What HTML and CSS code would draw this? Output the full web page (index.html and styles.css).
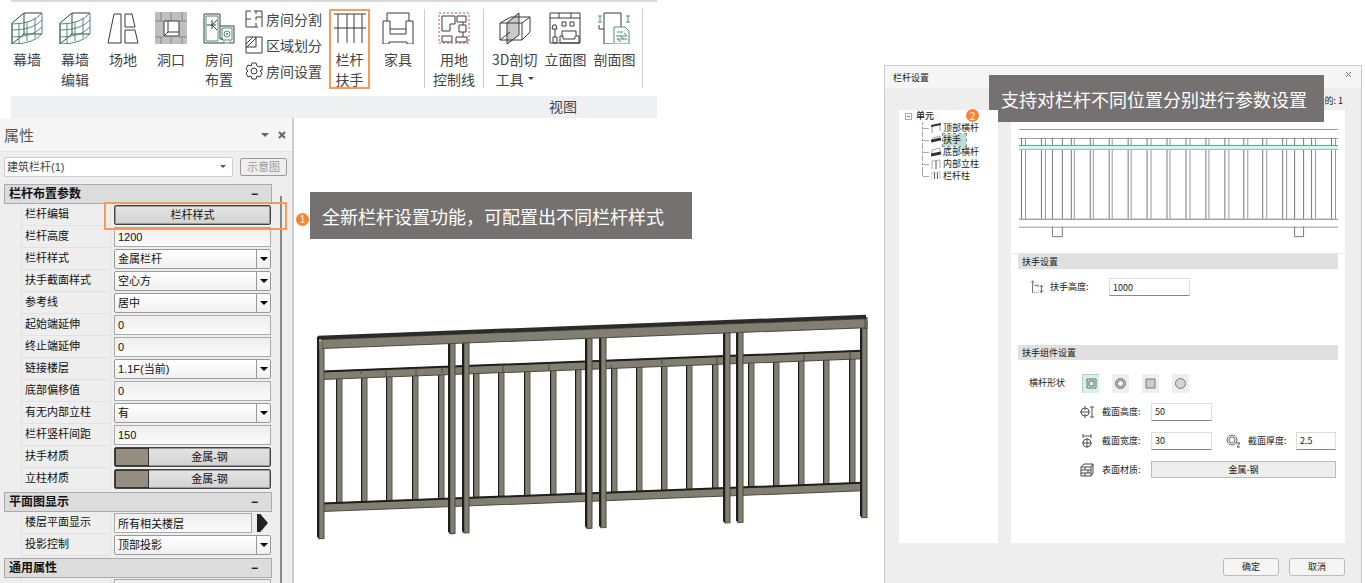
FILE: index.html
```html
<!DOCTYPE html>
<html lang="zh-CN">
<head>
    <meta charset="UTF-8">
    <meta name="viewport" content="width=device-width, initial-scale=1.0">
    <title>栏杆设置</title>
    <link rel="stylesheet" href="styles.css">
</head>
<body>
    <div class="page">
        <div class="workspace">
            <!-- Ribbon -->
            <div class="ribbon">
                <div class="tools">
                    <div class="tool-group wide">
                        <button class="tool">
                            <svg class="icon" viewBox="0 0 32 32"><path class="k" d="M1 32V11L13 1H31M13 1V22H31M1 32L13 22"/><path class="g" d="M1 12Q22 12 31 1V22Q22 32 1 32ZM1 18Q22 18 31 8M1 25Q22 25 31 15M8 12V31M16 10V29M24 6V26"/></svg>
                            <span>幕墙</span>
                        </button>
                        <button class="tool">
                            <svg class="icon" viewBox="0 0 32 32"><path class="k" d="M1 32V11L13 1H31M13 1V22H31M1 32L13 22"/><path class="g" d="M1 12Q22 12 31 1V22Q22 32 1 32ZM1 18Q22 18 31 8M1 25Q22 25 31 15M8 12V31M16 10V29M24 6V26"/></svg>
                            <span>幕墙<br>编辑</span>
                        </button>
                        <button class="tool">
                            <svg class="icon" viewBox="0 0 32 32"><path class="k" d="M7 2H14V31H1ZM18 2H25L28 15H18ZM18 18H28L31 31H18Z"/></svg>
                            <span>场地</span>
                        </button>
                        <button class="tool">
                            <svg class="icon" viewBox="0 0 32 32"><path fill="#bfbfbf" d="M0 0H32V32H0Z"/><path stroke="#858585" d="M0 9H8M24 9H32M0 25H8M24 25H32M6 0V9M16 0V9M27 0V9M6 25V32M16 25V32M27 25V32"/><path class="k" fill="#fff" d="M9 9H24V24H9Z"/><path class="k" d="M13 9V20H24M9 24L13 20"/></svg>
                            <span>洞口</span>
                        </button>
                        <button class="tool">
                            <svg class="icon" viewBox="0 0 32 32"><path class="g" d="M3 4H15V29H3ZM19 16H29V28H19ZM21 29V31H27V29"/><path class="k" d="M21 31H1V2H17V14H31V31H27M17 14V27H20M4 13H13M9 8V17M14 8L9 13L14 18"/><circle class="g" cx="24" cy="22" r="3"/><circle cx="24" cy="22" r="1" fill="#4f8c78"/></svg>
                            <span>房间<br>布置</span>
                        </button>
                    </div>
                    <div class="tool-list">
                        <button class="tool-small">
                            <svg class="icon-small" viewBox="0 0 18 18"><path class="k" d="M6 1H1V17H13M9 1H17V17M1 9H6M11 17V13M11 10V7H17M11 1V4"/></svg>
                            <span>房间分割</span>
                        </button>
                        <button class="tool-small">
                            <svg class="icon-small" viewBox="0 0 18 18"><path class="k" d="M1 1H17V17H1ZM1 11H11V1M1 8L8 1M2 11L11 2"/></svg>
                            <span>区域划分</span>
                        </button>
                        <button class="tool-small">
                            <svg class="icon-small" viewBox="0 0 18 18"><path class="k" d="M7 1H11L12 4L14 5L17 4V8L15 9L17 11L15 15L12 14L11 17H7L6 14L3 15L1 11L3 9L1 7L3 3L6 4Z"/><circle class="k" cx="9" cy="9" r="3"/></svg>
                            <span>房间设置</span>
                        </button>
                    </div>
                    <button class="tool marked">
                        <svg class="icon" viewBox="0 0 32 32"><path class="k" d="M0 2H32M0 16H32M4 2V31M13 2V31M20 2V31M28 2V31"/></svg>
                        <span>栏杆<br>扶手</span>
                    </button>
                    <div class="tool-group furniture">
                        <button class="tool">
                            <svg class="icon" viewBox="0 0 32 32"><path class="k" d="M5 9V1H27V9H31V32H25V30H7V32H1V9H8V22H24V9H27M8 17H24"/></svg>
                            <span>家具</span>
                        </button>
                    </div>
                    <div class="tool-group divided">
                        <button class="tool">
                            <svg class="icon" viewBox="0 0 32 32"><path stroke="#d0454c" stroke-dasharray="2 2" d="M1 1H31V31H1Z"/><path class="k" d="M4 4H17V12H12V19H4ZM19 4H28V10H19ZM21 13H28V20H21ZM18 25H29V30H18ZM4 24H14V30H4ZM25 10V13M25 20V25"/></svg>
                            <span>用地<br>控制线</span>
                        </button>
                    </div>
                    <div class="tool-group divided views">
                        <button class="tool">
                            <svg class="icon" viewBox="0 0 32 32"><path fill="#c9c9c9" d="M8 10L20 0V23L8 33Z"/><path class="k" d="M1 11L12 5H31V20L23 28H1ZM1 11H23V28M23 11L31 5M8 11L20 1V23L8 32ZM1 28L11 20"/></svg>
                            <span>3D剖切<br>工具<i class="caret"></i></span>
                        </button>
                        <button class="tool">
                            <svg class="icon" viewBox="0 0 32 32"><path class="k" d="M1 1H31V31H1ZM1 6H31M10 1V6M22 1V6M13 10H17V14H13ZM21 10H25V14H21ZM3 17L4 13H7L8 17ZM6 17V25M4 25H8V31H4ZM13 24V19H27V24H30V31H11V24H14V27H26V24"/></svg>
                            <span>立面图</span>
                        </button>
                        <button class="tool">
                            <svg class="icon" viewBox="0 0 32 32"><path class="k" d="M15 32H6V1H23V15M1 13V17H6"/><path class="g" d="M0 4H4M2 4V10M0 10H4M28 4H32M30 4V10M28 10H32"/><path class="g" fill="#fff" d="M16 15H27L31 19V32H16Z"/><path class="g" d="M19 20H25M18 24H29L26 21M29 27H19L23 30M22 24L26 27"/></svg>
                            <span>剖面图</span>
                        </button>
                    </div>
                </div>
                <div class="ribbon-title">视图</div>
            </div>

            <div class="model-area">
                <!-- Properties panel -->
                <div class="panel">
                    <div class="panel-head">
                        <h2>属性</h2>
                        <button class="head-btn" aria-label="菜单"><i class="arrow"></i></button>
                        <button class="head-btn" aria-label="关闭"><svg viewBox="0 0 8 8"><path stroke="#666" stroke-width="2" d="M1 1L7 7M7 1L1 7"/></svg></button>
                    </div>
                    <div class="type-row">
                        <div class="pick type-pick">
                            <select aria-label="类型"><option>建筑栏杆(1)</option></select>
                        </div>
                        <button class="sketch-btn">示意图</button>
                    </div>
                    <div class="params">
                        <div class="groups">
                            <h3>栏杆布置参数<span>−</span></h3>
                            <div class="row row-marked"><label for="edit">栏杆编辑</label><button class="style-btn" id="edit">栏杆样式</button></div>
                            <div class="row"><label for="height">栏杆高度</label><input type="text" id="height" value="1200"></div>
                            <div class="row"><label for="style">栏杆样式</label><div class="pick"><select id="style"><option>金属栏杆</option></select></div></div>
                            <div class="row"><label for="section">扶手截面样式</label><div class="pick"><select id="section"><option>空心方</option></select></div></div>
                            <div class="row"><label for="refline">参考线</label><div class="pick"><select id="refline"><option>居中</option></select></div></div>
                            <div class="row"><label for="start">起始端延伸</label><input type="text" id="start" value="0"></div>
                            <div class="row"><label for="end">终止端延伸</label><input type="text" id="end" value="0"></div>
                            <div class="row"><label for="floor">链接楼层</label><div class="pick"><select id="floor"><option>1.1F(当前)</option></select></div></div>
                            <div class="row"><label for="offset">底部偏移值</label><input type="text" id="offset" value="0"></div>
                            <div class="row"><label for="inner">有无内部立柱</label><div class="pick"><select id="inner"><option>有</option></select></div></div>
                            <div class="row"><label for="spacing">栏杆竖杆间距</label><input type="text" id="spacing" value="150"></div>
                            <div class="row"><label for="mat1">扶手材质</label><button class="mat-btn" id="mat1"><i></i><span>金属-钢</span></button></div>
                            <div class="row"><label for="mat2">立柱材质</label><button class="mat-btn" id="mat2"><i></i><span>金属-钢</span></button></div>
                            <h3>平面图显示<span>−</span></h3>
                            <div class="row"><label for="plan">楼层平面显示</label><input type="text" id="plan" value="所有相关楼层"><button class="play" aria-label="展开"></button></div>
                            <div class="row"><label for="proj">投影控制</label><div class="pick"><select id="proj"><option>顶部投影</option></select></div></div>
                            <h3>通用属性<span>−</span></h3>
                            <div class="row"><label for="common"></label><input type="text" id="common"></div>
                        </div>
                        <div class="scrollbar"></div>
                    </div>
                </div>

                <!-- 3D view -->
                <div class="viewport">
                    <div class="note">
                        <span class="badge">1</span>
                        <p class="callout">全新栏杆设置功能，可配置出不同栏杆样式</p>
                    </div>
                    <svg class="railing" viewBox="0 0 560 245">
                        <defs>
                            <g id="post"><path fill="#827e72" stroke="#4a483f" d="M2 0H7V196H2Z"/><path fill="#1e1f1b" d="M0 -1H2V196L0 194Z"/></g>
                            <g id="bar"><path fill="#827e72" stroke="#5a584e" d="M1 0H6V130H1Z"/><path fill="#1e1f1b" d="M0 0H1V130H0Z"/></g>
                        </defs>
                        <g transform="skewY(-2.2)">
                            <use href="#bar" x="26" y="76"/><use href="#bar" x="51" y="76"/><use href="#bar" x="76" y="76"/><use href="#bar" x="102" y="76"/><use href="#bar" x="128" y="76"/>
                            <use href="#bar" x="163" y="76"/><use href="#bar" x="188" y="76"/><use href="#bar" x="214" y="76"/><use href="#bar" x="240" y="76"/><use href="#bar" x="265" y="76"/>
                            <use href="#bar" x="301" y="76"/><use href="#bar" x="326" y="76"/><use href="#bar" x="351" y="76"/><use href="#bar" x="376" y="76"/><use href="#bar" x="402" y="76"/>
                            <use href="#bar" x="438" y="76"/><use href="#bar" x="463" y="76"/><use href="#bar" x="488" y="76"/><use href="#bar" x="513" y="76"/><use href="#bar" x="539" y="76"/>
                            <path fill="#827e72" stroke="#4a483f" d="M12 72H552V80H12ZM12 204H552V212H12Z"/>
                            <path fill="#1e1f1b" d="M12 71H552V73H12ZM12 203H552V205H12Z"/>
                            <path stroke="#4a483f" d="M51 72V76M76 72V80M106 72V80M132 72V78M193 72V80M239 72V80M301 77V80M352 73V78M407 72V80M494 72V80M540 72V80"/>
                            <use href="#post" x="7" y="43"/><use href="#post" x="138" y="43"/><use href="#post" x="152" y="43"/><use href="#post" x="275" y="43"/>
                            <use href="#post" x="289" y="43"/><use href="#post" x="413" y="43"/><use href="#post" x="426" y="43"/><use href="#post" x="550" y="43"/>
                            <path fill="#827e72" stroke="#4a483f" d="M12 40H555V49H12ZM555 39H557V50H555Z"/>
                            <path fill="#2b2c27" d="M8 36H556V40H8Z"/>
                            <path fill="#1e1f1b" d="M7 37H9V50H7Z"/>
                            <path fill="#827e72" d="M9 41H12V50H9Z"/>
                        </g>
                    </svg>
                </div>
            </div>
        </div>

        <!-- Railing settings dialog -->
        <div class="dialog">
            <div class="dialog-head">
                <h2>栏杆设置</h2>
                <button class="close" aria-label="关闭"><svg viewBox="0 0 8 8"><path stroke="#777" d="M2 2L7 7M7 2L2 7"/></svg></button>
            </div>
            <p class="callout dialog-callout">支持对栏杆不同位置分别进行参数设置</p>
            <div class="count">的: 1</div>
            <div class="panes">
                <div class="tree">
                    <span class="badge tree-badge">2</span>
                    <div class="tree-root"><i></i>单元</div>
                    <ul>
                        <li><svg viewBox="0 0 10 10"><path stroke="#999" d="M1 10V3M9 8V1"/><path stroke="#333" stroke-width="2" d="M0 3L10 1"/></svg><span>顶部横杆</span></li>
                        <li><svg viewBox="0 0 10 10"><path stroke="#333" stroke-width="3" d="M0 6L10 4"/><path stroke="#aaa" d="M1 3L10 1"/></svg><span class="selected">扶手</span></li>
                        <li><svg viewBox="0 0 10 10"><path stroke="#aaa" d="M1 9V3L9 1V8"/><path stroke="#333" stroke-width="3" d="M0 8L10 6"/></svg><span>底部横杆</span></li>
                        <li><svg viewBox="0 0 10 10"><path stroke="#aaa" d="M1 10V2L9 1V9"/><path stroke="#555" d="M5 2V10"/></svg><span>内部立柱</span></li>
                        <li><svg viewBox="0 0 10 10"><path stroke="#bbb" d="M0 9V2L9 1V8"/><path stroke="#555" d="M3.500 2V8M6.500 2V8"/></svg><span>栏杆柱</span></li>
                    </ul>
                </div>
                <div class="detail">
                    <div class="preview">
                        <svg viewBox="0 0 320 114">
                            <path stroke="#999" d="M0 4.500H320M0 13.500H320M0 102.500H320"/>
                            <path stroke="#777" d="M0 94.500H320M33.500 13V94M43.500 13V94M276.500 13V94M285.500 13V94"/>
                            <path stroke="#777" d="M33.500 102V112H43.500V102M276.500 102V112H285.500V102"/>
                            <path stroke="#777" d="M2.500 13V94M22.500 13V94M52.500 13V94M71.500 13V94M90.500 13V94M109.500 13V94M128.500 13V94M148.500 13V94M167.500 13V94M187.500 13V94M206.500 13V94M225.500 13V94M244.500 13V94M264.500 13V94M293.500 13V94M313.500 13V94"/>
                            <path stroke="#999" d="M6.500 13V94M26.500 13V94M55.500 13V94M74.500 13V94M93.500 13V94M112.500 13V94M132.500 13V94M151.500 13V94M171.500 13V94M190.500 13V94M210.500 13V94M229.500 13V94M248.500 13V94M268.500 13V94M297.500 13V94M317.500 13V94"/>
                            <path fill="#d9f3ec" d="M0 20H320V25H0Z"/>
                            <path stroke="#56a08d" d="M0 20.500H320"/><path stroke="#8fc4b6" d="M0 24.500H320"/>
                        </svg>
                    </div>
                    <h3>扶手设置</h3>
                    <div class="fields rail-fields">
                        <svg class="mini" viewBox="0 0 14 16"><circle cx="2" cy="2" r="1" stroke="#555"/><path stroke="#555" d="M2 3V15M4 6H9M12 6V15M10 8L12 6L14 8M10 12L12 14L14 12"/><path stroke="#555" stroke-dasharray="1 1" d="M4 14H10M8 7V9"/></svg>
                        <label for="rail-height">扶手高度:</label>
                        <input type="text" id="rail-height" value="1000">
                    </div>
                    <h3>扶手组件设置</h3>
                    <div class="shapes">
                        <span>横杆形状</span>
                        <button class="shape on" aria-label="空心方"><svg viewBox="0 0 11 11"><path stroke="#666" d="M1 1H10V10H1ZM3 3H8V8H3Z"/></svg></button>
                        <button class="shape" aria-label="空心圆"><svg viewBox="0 0 11 11"><circle stroke="#777" fill="#bbb" cx="5.500" cy="5.500" r="5"/><circle stroke="#777" fill="#fff" cx="5.500" cy="5.500" r="3"/></svg></button>
                        <button class="shape" aria-label="实心方"><svg viewBox="0 0 11 11"><path stroke="#777" fill="#ccc" d="M1 1H10V10H1Z"/></svg></button>
                        <button class="shape" aria-label="实心圆"><svg viewBox="0 0 11 11"><circle stroke="#777" fill="#d4d4d4" cx="5.500" cy="5.500" r="5"/></svg></button>
                    </div>
                    <div class="fields">
                        <svg class="mini" viewBox="0 0 14 14"><circle cx="5" cy="7" r="4" stroke="#555"/><path stroke="#555" d="M0 7H10M5 1V5M5 9V13M10 2H14M12 2V12M10 12H14"/></svg>
                        <label for="sec-height">截面高度:</label>
                        <input type="text" id="sec-height" value="50">
                    </div>
                    <div class="fields">
                        <svg class="mini" viewBox="0 0 14 14"><circle cx="7" cy="9" r="4" stroke="#555"/><path stroke="#555" d="M7 4V14M2 9H12M3 2H11M3 0V4M11 0V4"/></svg>
                        <label for="sec-width">截面宽度:</label>
                        <input type="text" id="sec-width" value="30">
                        <svg class="mini second" viewBox="0 0 14 14"><circle cx="6" cy="6" r="5" stroke="#666"/><circle cx="6" cy="6" r="3" stroke="#666"/><path stroke="#555" d="M10 9H14L11 13H14"/></svg>
                        <label for="sec-thick">截面厚度:</label>
                        <input type="text" id="sec-thick" class="short" value="2.5">
                    </div>
                    <div class="fields">
                        <svg class="mini" viewBox="0 0 14 14"><path stroke="#444" d="M1 4L4 1H13V10L11 13H1ZM1 4H11V13M11 4L13 1M1 7H11M1 10H11M5 4V7M8 7V10M5 10V13"/></svg>
                        <label for="surface">表面材质:</label>
                        <button class="surface" id="surface">金属-钢</button>
                    </div>
                </div>
            </div>
            <div class="dialog-foot">
                <button>确定</button>
                <button>取消</button>
            </div>
        </div>
    </div>
</body>
</html>
```
FILE: styles.css
```css
*, *::before, *::after {
    box-sizing: border-box;
}
body {
    margin: 0;
    background: #fff;
    color: #222;
    font-family: "Liberation Sans", "Noto Sans CJK SC", sans-serif;
}
h2, h3, p, ul {
    margin: 0;
    padding: 0;
    font-weight: normal;
}
button, input, select {
    margin: 0;
    padding: 0;
    border: none;
    border-radius: 0;
    background: none;
    color: inherit;
    font: inherit;
    appearance: none;
}
svg {
    display: block;
    flex-shrink: 0;
    fill: none;
}
.page {
    display: flex;
    height: 100vh;
    overflow: hidden;
}
.workspace {
    flex: 1;
    min-width: 0;
    display: flex;
    flex-direction: column;
}

/* Ribbon */
.ribbon {
    width: 646px;
    margin-left: 11px;
    border-top: 2px solid #d9d9d9;
    color: #444;
    font: 14px/20px "Noto Sans CJK SC", sans-serif;
}
.tools {
    display: flex;
    height: 94px;
    padding-top: 7px;
}
.tool-group {
    display: flex;
    height: 79px;
}
.wide {
    gap: 16px;
}
.tool {
    display: flex;
    flex-direction: column;
    align-items: center;
    min-width: 32px;
    height: 80px;
    padding-top: 3px;
    white-space: nowrap;
}
.tool span {
    margin-top: 5px;
}
.icon {
    width: 32px;
    height: 32px;
}
.k {
    stroke: #3a3a3a;
}
.g {
    stroke: #4f8c78;
}
.tool-list {
    display: flex;
    flex-direction: column;
    gap: 6px;
    margin: 0 7px 0 10px;
}
.tool-small {
    display: flex;
    align-items: center;
    gap: 3px;
    height: 20px;
}
.icon-small {
    width: 18px;
    height: 18px;
}
.marked {
    width: 41px;
    padding-top: 1px;
    border: 2px solid #f79b57;
}
.furniture {
    padding: 0 10px 0 12px;
}
.divided {
    padding: 0 8px;
    border-left: 1px solid #ccc;
}
.views {
    gap: 7px;
    padding-right: 7px;
    border-right: 1px solid #ccc;
}
.caret {
    display: inline-block;
    margin: 0 0 5px 4px;
    border: 3px solid transparent;
    border-top-color: #444;
    border-bottom: none;
}
.ribbon-title {
    height: 22px;
    padding-left: 458px;
    background: #edf1f2;
    text-align: center;
}

/* Properties panel */
.model-area {
    flex: 1;
    min-height: 0;
    display: flex;
}
.panel {
    display: flex;
    flex-direction: column;
    width: 294px;
    border-right: 2px solid #ccc;
    background: #eee;
    color: #111;
    font-size: 11px;
    overflow: hidden;
}
.panel-head {
    display: flex;
    align-items: center;
    height: 34px;
    padding: 0 6px 0 4px;
    border-bottom: 1px solid #e4e4e4;
    background: #f5f5f5;
    color: #555;
}
.panel-head h2 {
    flex: 1;
    font-size: 15px;
}
.head-btn {
    margin-left: 9px;
}
.head-btn svg, .close svg {
    width: 8px;
    height: 8px;
}
.arrow {
    display: block;
    border: 4px solid transparent;
    border-top-color: #666;
    border-bottom: none;
}
.type-row {
    display: flex;
    gap: 7px;
    padding: 5px 5px 7px 4px;
    color: #444;
}
.pick {
    position: relative;
    flex: 1;
    height: 20px;
}
.pick select {
    width: 100%;
    height: 100%;
    padding: 0 16px 0 3px;
    border: 1px solid #999;
    border-radius: 2px;
    background: linear-gradient(#fff, #efefef);
}
.pick::before {
    content: "";
    position: absolute;
    top: 1px;
    right: 14px;
    bottom: 1px;
    border-left: 1px solid #999;
}
.pick::after {
    content: "";
    position: absolute;
    top: 8px;
    right: 3px;
    border: 4px solid transparent;
    border-top-color: #000;
    border-bottom: none;
}
.type-pick select {
    padding-left: 2px;
    border-color: #ccc;
    background: #fff;
}
.type-pick::before {
    display: none;
}
.type-pick::after {
    right: 7px;
    border-width: 3px;
    border-top-color: #555;
    border-bottom: none;
}
.sketch-btn {
    width: 47px;
    height: 18px;
    margin-top: 1px;
    border: 1px solid #999;
    border-radius: 2px;
    color: #999;
    line-height: 16px;
}
.params {
    flex: 1;
    min-height: 0;
    display: flex;
    gap: 8px;
    padding-left: 4px;
}
.groups {
    width: 268px;
}
.groups h3 {
    display: flex;
    justify-content: space-between;
    height: 20px;
    margin-top: 2px;
    padding: 0 13px 0 4px;
    border: 1px solid #aaa;
    background: #dcdcdc;
    font-size: 12px;
    font-weight: bold;
    line-height: 18px;
}
.groups h3:first-child {
    margin-top: 0;
}
.row {
    position: relative;
    display: flex;
    align-items: center;
    height: 22px;
    padding-right: 1px;
}
.row label {
    width: 90px;
    height: 22px;
    margin: 0 3px 0 17px;
    padding-left: 3px;
    border: 1px solid #e2e2e2;
    border-top: none;
    line-height: 21px;
}
.row input {
    flex: 1;
    min-width: 0;
    height: 20px;
    padding: 0 3px;
    border: 1px solid #aaa;
    background: linear-gradient(#eee, #fafafa);
}
.style-btn, .mat-btn {
    flex: 1;
    height: 20px;
    border: 1px solid #444;
    border-radius: 2px;
    background: linear-gradient(#e4e4e4, #d2d2d2);
    box-shadow: inset 0 0 0 1px #999;
    line-height: 18px;
}
.row-marked::after {
    content: "";
    position: absolute;
    top: -2px;
    left: 100px;
    width: 183px;
    height: 28px;
    border: 2px solid #f79b57;
    pointer-events: none;
    z-index: 1;
}
.mat-btn {
    display: flex;
}
.mat-btn i {
    width: 34px;
    height: 18px;
    border: 1px solid #333;
    background: #958e80;
}
.mat-btn span {
    flex: 1;
}
.play {
    width: 11px;
    height: 18px;
    margin: 0 3px 0 5px;
    background: #222;
    clip-path: polygon(0 0, 30% 0, 100% 50%, 30% 100%, 0 100%);
}
.scrollbar {
    width: 2px;
    margin-top: 12px;
    background: #888;
}

/* 3D view */
.viewport {
    flex: 1;
    padding-top: 74px;
}
.note {
    display: flex;
    align-items: center;
    gap: 1px;
    padding-left: 2px;
}
.badge {
    width: 13px;
    height: 13px;
    border-radius: 50%;
    background: #fa8231;
    color: #fff;
    font-size: 10px;
    line-height: 13px;
    text-align: center;
}
.note .badge {
    margin-top: 8px;
}
.callout {
    padding: 1px 28px 0 12px;
    background: #767171;
    color: #fff;
    font: 18px/46px "Noto Sans CJK SC", sans-serif;
    white-space: nowrap;
}
.railing {
    width: 560px;
    margin: 61px 0 0 16px;
    overflow: visible;
}

/* Dialog */
.dialog {
    position: relative;
    display: flex;
    flex-direction: column;
    width: 478px;
    margin: 65px 3px 0 0;
    border: 1px solid #ccc;
    border-bottom: none;
    background: #eee;
    font: 9px/12px "Noto Sans CJK SC", sans-serif;
}
.dialog-head {
    display: flex;
    justify-content: space-between;
    height: 22px;
    padding: 6px 9px 0 8px;
    background: #f5f5f5;
}
.dialog-head h2 {
    font-size: 9px;
}
.close {
    width: 8px;
    height: 8px;
    margin-top: -2px;
}
.dialog-callout {
    position: absolute;
    top: 9px;
    left: 104px;
    padding-right: 17px;
}
.count {
    height: 22px;
    padding: 7px 18px 0 0;
    text-align: right;
}
.panes {
    flex: 1;
    display: flex;
    gap: 13px;
    padding: 0 16px 0 14px;
}
.tree {
    position: relative;
    width: 99px;
    background: #fff;
}
.tree-badge {
    position: absolute;
    top: -1px;
    left: 67px;
}
.tree-root {
    display: flex;
    align-items: center;
    gap: 4px;
    padding-left: 6px;
    font-weight: 500;
}
.tree-root i {
    width: 7px;
    height: 7px;
    border: 1px solid #aaa;
    background: linear-gradient(#6b84a8, #6b84a8) center / 3px 1px no-repeat;
}
.tree ul {
    width: 60px;
    margin-left: 23px;
    list-style: none;
}
.tree li {
    display: flex;
    align-items: center;
    gap: 2px;
    height: 12px;
    border-left: 1px dashed #aaa;
}
.tree li::before {
    content: "";
    width: 6px;
    border-top: 1px dashed #aaa;
}
.tree li:last-child {
    border-image: linear-gradient(#aaa 50%, transparent 50%) 1;
}
.tree li svg {
    width: 10px;
    height: 10px;
}
.tree li span {
    white-space: nowrap;
    line-height: 12px;
}
.tree .selected {
    padding-right: 5px;
    outline: 1px dashed #6f9d92;
    background: #bfddd6;
}
.detail {
    flex: 1;
    padding: 0 7px;
    background: #fff;
}
.preview {
    height: 144px;
    margin: 0 -7px;
    padding: 15px 7px 0 8px;
    border-bottom: 1px solid #e8e8e8;
}
.detail h3 {
    height: 15px;
    padding-left: 4px;
    background: #e0e0e0;
    font-size: 9px;
    line-height: 15px;
}
.fields {
    display: flex;
    align-items: center;
    height: 29px;
    padding-left: 62px;
}
.rail-fields {
    height: 76px;
    padding: 0 0 40px 12px;
}
.mini {
    width: 14px;
    height: 14px;
}
.fields label {
    width: 42px;
    margin: 0 7px 0 8px;
    white-space: nowrap;
}
.fields input {
    width: 61px;
    height: 18px;
    padding: 0 3px;
    border: 1px solid #ddd;
    border-bottom-color: #888;
}
.rail-fields label {
    width: 52px;
    margin-left: 6px;
}
.rail-fields input {
    width: 81px;
}
.fields .second {
    margin-left: 14px;
}
.second + label {
    margin-right: 6px;
}
.fields .short {
    width: 40px;
}
.shapes {
    display: flex;
    align-items: center;
    height: 37px;
    padding: 9px 0 0 11px;
    gap: 13px;
}
.shapes span {
    width: 40px;
}
.shape {
    display: flex;
    align-items: center;
    justify-content: center;
    width: 17px;
    height: 19px;
    background: #eee;
}
.shape.on {
    border: 1px solid #b5cfc8;
    border-right: none;
    border-bottom: none;
    background: #d6f1ea;
}
.shape svg {
    width: 11px;
    height: 11px;
}
.surface {
    width: 185px;
    height: 17px;
    border: 1px solid #bbb;
    background: #eee;
}
.dialog-foot {
    display: flex;
    justify-content: flex-end;
    gap: 10px;
    height: 40px;
    padding: 15px 16px 0 0;
}
.dialog-foot button {
    width: 56px;
    height: 18px;
    border: 1px solid #bbb;
    border-radius: 3px;
    background: #f5f5f5;
}
```
